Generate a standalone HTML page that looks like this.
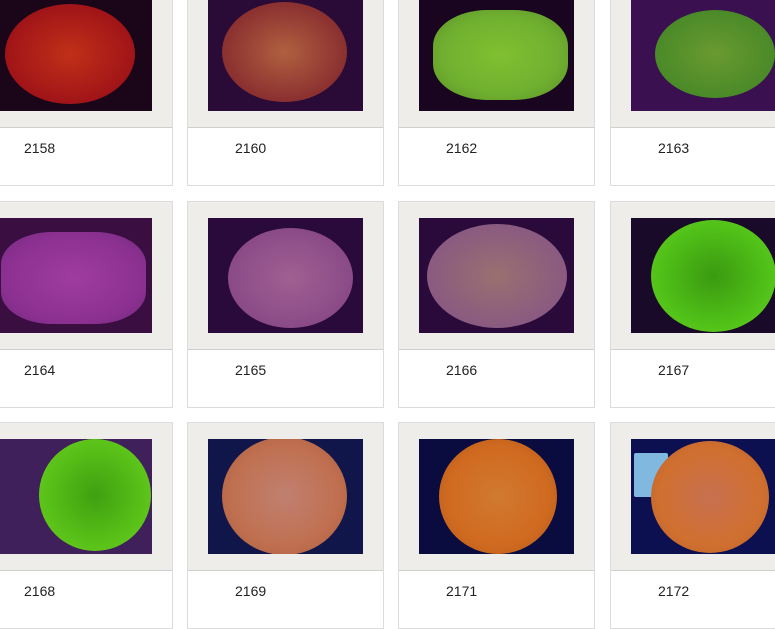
<!DOCTYPE html>
<html><head><style>
body{margin:0;width:775px;height:625px;overflow:hidden;background:#fff;position:relative;font-family:"Liberation Sans",Arial,sans-serif}
.c{position:absolute;width:195px;height:205px;border:1px solid #dcdcdc;background:#fff}
.f{position:absolute;left:0;top:0;width:195px;height:147px;background:#eeede9;border-bottom:1px solid #cfcfcf}
.i{position:absolute;left:20px;top:16px;width:155px;height:115px;overflow:hidden}
.i b{position:absolute;border-radius:50%}
.t{position:absolute;left:47px;top:160px;font-size:14px;color:#222}
</style></head><body>
<div class="c" style="left:-24px;top:-21px"><div class="f"><div class="i" style="background:#1a0618"><b style="left:8px;top:8px;width:130px;height:100px;background:radial-gradient(#c03018,#a01418 70%,#701020)"></b></div></div><div class="t">2158</div></div>
<div class="c" style="left:187px;top:-21px"><div class="f"><div class="i" style="background:#2a0a36"><b style="left:14px;top:6px;width:125px;height:100px;background:radial-gradient(#b06040,#8a3030 70%,#6a2030)"></b></div></div><div class="t">2160</div></div>
<div class="c" style="left:398px;top:-21px"><div class="f"><div class="i" style="background:#1a0520"><b style="left:14px;top:14px;width:135px;height:90px;background:radial-gradient(#80c030,#70b030 60%,#5a9028);border-radius:40%"></b></div></div><div class="t">2162</div></div>
<div class="c" style="left:610px;top:-21px"><div class="f"><div class="i" style="background:#3a1050"><b style="left:24px;top:14px;width:120px;height:88px;background:radial-gradient(#6a9a30,#4a8a28 70%,#3a7020)"></b></div></div><div class="t">2163</div></div>

<div class="c" style="left:-24px;top:201px"><div class="f"><div class="i" style="background:#3a0e40"><b style="left:4px;top:14px;width:145px;height:92px;background:radial-gradient(#a03ca0,#8a3090 70%,#70287a);border-radius:35%"></b></div></div><div class="t">2164</div></div>
<div class="c" style="left:187px;top:201px"><div class="f"><div class="i" style="background:#2a0a3a"><b style="left:20px;top:10px;width:125px;height:100px;background:radial-gradient(#a06090,#8a4a88 70%,#6a3a70)"></b></div></div><div class="t">2165</div></div>
<div class="c" style="left:398px;top:201px"><div class="f"><div class="i" style="background:#2a0a3a"><b style="left:8px;top:6px;width:140px;height:104px;background:radial-gradient(#9a7070,#8a5a80 70%,#6a4070)"></b></div></div><div class="t">2166</div></div>
<div class="c" style="left:610px;top:201px"><div class="f"><div class="i" style="background:#1a0a2a"><b style="left:20px;top:2px;width:125px;height:112px;background:radial-gradient(#3a9a10,#50c018 60%,#68d020)"></b></div></div><div class="t">2167</div></div>

<div class="c" style="left:-24px;top:422px"><div class="f"><div class="i" style="background:#40205a"><b style="left:42px;top:0;width:112px;height:112px;background:radial-gradient(#40a010,#58c018 60%,#70d020)"></b></div></div><div class="t">2168</div></div>
<div class="c" style="left:187px;top:422px"><div class="f"><div class="i" style="background:#10164a"><b style="left:14px;top:-2px;width:125px;height:118px;background:radial-gradient(#c08070,#c07050 60%,#a85a38)"></b></div></div><div class="t">2169</div></div>
<div class="c" style="left:398px;top:422px"><div class="f"><div class="i" style="background:#0a0c40"><b style="left:20px;top:0;width:118px;height:115px;background:radial-gradient(#d07a30,#d06a20 60%,#b05818)"></b></div></div><div class="t">2171</div></div>
<div class="c" style="left:610px;top:422px"><div class="f"><div class="i" style="background:#0c1050"><b style="left:3px;top:14px;width:34px;height:44px;border-radius:2px;background:#80b8e0"></b><b style="left:20px;top:2px;width:118px;height:112px;background:radial-gradient(#c87050,#d07030 60%,#b86028)"></b></div></div><div class="t">2172</div></div>
</body></html>
